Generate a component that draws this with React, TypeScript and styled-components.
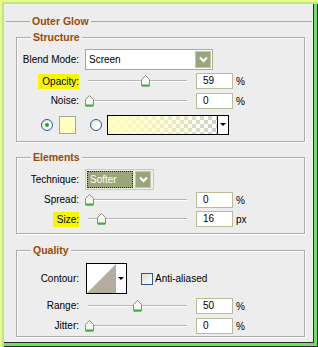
import React from "react";
import styled, { createGlobalStyle } from "styled-components";

const GlobalStyle = createGlobalStyle`
  html, body {
    margin: 0;
    padding: 0;
    background: #ededed;
  }
  body {
    font-family: "Liberation Sans", Arial, sans-serif;
    font-size: 10px;
    color: #000;
  }
`;

const Frame = styled.div`
  width: 318px;
  height: 347px;
  box-sizing: border-box;
  background: #ededed;
  padding: 15px 6px 0 6px;
  overflow: hidden;
  box-shadow: inset 2px 2px 0 #f4f48c, inset 4px 4px 0 #b4ec84,
    inset -1px -1px 0 #2b2b2b, inset -4px -4px 0 #78dc68,
    inset -5px -5px 0 #2b2b2b;
`;

const OuterSet = styled.fieldset`
  margin: 0;
  padding: 0 7px 0 10px;
  border: none;
  border-top: 1px solid #a9a9a9;
  min-width: 0;
`;

const Group = styled.fieldset<{ $top: number; $padTop: number; $padBottom: number }>`
  margin: ${(p) => p.$top}px 0 0 0;
  padding: ${(p) => p.$padTop}px 0 ${(p) => p.$padBottom}px 0;
  border: 1px solid #ababab;
  box-shadow: inset 1px 1px 0 #fff, 1px 1px 0 #fff;
  min-width: 0;
`;

const Legend = styled.legend`
  margin-left: 14px;
  padding: 0 2px;
  background: #ededed;
  font-size: 10.5px;
  font-weight: bold;
  line-height: 12px;
  color: #9c4a02;
`;

const Row = styled.div<{ $h: number; $mt?: number }>`
  display: flex;
  align-items: center;
  height: ${(p) => p.$h}px;
  margin-top: ${(p) => p.$mt ?? 0}px;
`;

const Label = styled.div`
  width: 62px;
  flex: none;
  text-align: right;
  line-height: 12px;
`;

const Highlight = styled.span`
  display: inline-block;
  background: #f6f600;
  padding: 2px 0 1px 4px;
`;

const Select = styled.div<{ $w: number }>`
  display: flex;
  align-items: center;
  box-sizing: border-box;
  width: ${(p) => p.$w}px;
  height: 21px;
  margin-left: 6px;
  border: 1px solid #a9ad8c;
  background: #fff;
`;

const SelectText = styled.div`
  flex: 1;
  padding-left: 3px;
`;

const ArrowBtn = styled.div`
  display: flex;
  align-items: center;
  justify-content: center;
  box-sizing: border-box;
  width: 16px;
  height: 17px;
  margin-right: 1px;
  background: #9aa57b;
  border: 1px solid #c3c8ab;
`;

const TechSelect = styled(Select)`
  border-color: #c9ccb5;
  background: #eef0e6;
  padding: 1px;
  gap: 2px;
`;

const TechValue = styled.div`
  flex: 1;
  height: 100%;
  box-sizing: border-box;
  background: #9ba67b;
  border: 1px dotted #2a2a1a;
  color: #fff;
  padding-left: 2px;
  line-height: 15px;
`;

const SliderTrack = styled.div`
  position: relative;
  width: 102px;
  height: 16px;
  margin-left: 6px;
  flex: none;
  &::before {
    content: "";
    position: absolute;
    left: 3px;
    right: 0;
    top: 7px;
    border-top: 1px solid #b5b5b5;
    border-bottom: 1px solid #fff;
  }
`;

const Thumb = styled.svg`
  position: absolute;
  top: 2px;
  width: 9px;
  height: 12px;
`;

const NumBox = styled.div`
  box-sizing: border-box;
  width: 37px;
  height: 16px;
  margin-left: 9px;
  border: 1px solid #b9bc9b;
  background: #fff;
  padding-left: 6px;
  line-height: 14px;
  flex: none;
`;

const Unit = styled.span`
  margin-left: 3px;
`;

const Radio = styled.div<{ $checked?: boolean; $ml: number }>`
  position: relative;
  box-sizing: border-box;
  width: 12px;
  height: 12px;
  margin-left: ${(p) => p.$ml}px;
  border: 1px solid #2a5b8a;
  border-radius: 50%;
  background: radial-gradient(circle at 65% 65%, #fff 30%, #dcdcd4 100%);
  flex: none;
  &::after {
    content: "";
    display: ${(p) => (p.$checked ? "block" : "none")};
    position: absolute;
    left: 3px;
    top: 3px;
    width: 4px;
    height: 4px;
    border-radius: 50%;
    background: #22a622;
  }
`;

const Swatch = styled.div`
  box-sizing: border-box;
  width: 17px;
  height: 18px;
  margin-left: 6px;
  border: 1px solid #a5a5a0;
  background: #ffffc2;
`;

const GradientPicker = styled.div`
  display: flex;
  box-sizing: border-box;
  width: 122px;
  height: 20px;
  margin-left: 5px;
  border: 1px solid #000;
`;

const GradientFill = styled.div`
  flex: 1;
  background: linear-gradient(to right, #ffffc2 0%, rgba(255, 255, 194, 0.6) 55%, rgba(255, 255, 194, 0) 100%),
    conic-gradient(#cfcfcf 25%, #fff 0 50%, #cfcfcf 0 75%, #fff 0) 0 0 / 8px 8px;
`;

const DropStrip = styled.div`
  display: flex;
  align-items: center;
  justify-content: center;
  width: 10px;
  border-left: 1px solid #000;
  background: #fff;
`;

const Caret = styled.div`
  width: 0;
  height: 0;
  border-left: 3px solid transparent;
  border-right: 3px solid transparent;
  border-top: 3px solid #000;
`;

const ContourBox = styled.div`
  display: flex;
  box-sizing: border-box;
  width: 41px;
  height: 31px;
  margin-left: 7px;
  border: 1px solid #000;
  background: #fff;
`;

const ContourStrip = styled.div`
  display: flex;
  align-items: center;
  justify-content: center;
  width: 10px;
  background: #fbfbfb;
`;

const CheckBox = styled.div`
  box-sizing: border-box;
  width: 12px;
  height: 12px;
  margin-left: 14px;
  border: 1px solid #2a5b8a;
  background: linear-gradient(135deg, #dcdcd4, #fff);
  flex: none;
`;

const CheckLabel = styled.span`
  margin-left: 2px;
`;

function Chevron() {
  return (
    <svg width="9" height="7" viewBox="0 0 9 7">
      <polyline points="1,1.5 4.5,5 8,1.5" fill="none" stroke="#fff" strokeWidth="2" />
    </svg>
  );
}

function Slider({ value }: { value: number }) {
  return (
    <SliderTrack>
      <Thumb viewBox="0 0 9 12" style={{ left: value * 93 }}>
        <polygon points="0.5,4.5 4.5,0.5 8.5,4.5 8.5,11 0.5,11" fill="#f6f6f2" stroke="#8d8d84" />
        <line x1="1" y1="10.5" x2="8" y2="10.5" stroke="#3bb33b" strokeWidth="2" />
      </Thumb>
    </SliderTrack>
  );
}

function SliderRow({
  label,
  value,
  frac,
  unit,
  mark,
  mt,
}: {
  label: string;
  value: string;
  frac: number;
  unit: string;
  mark?: boolean;
  mt: number;
}) {
  return (
    <Row $h={16} $mt={mt}>
      <Label>{mark ? <Highlight>{label}</Highlight> : label}</Label>
      <Slider value={frac} />
      <NumBox>{value}</NumBox>
      <Unit>{unit}</Unit>
    </Row>
  );
}

export default function App() {
  return (
    <Frame>
      <GlobalStyle />
      <OuterSet>
        <Legend>Outer Glow</Legend>

        <Group $top={4} $padTop={6} $padBottom={7}>
          <Legend>Structure</Legend>
          <Row $h={21}>
            <Label>Blend Mode:</Label>
            <Select $w={128}>
              <SelectText>Screen</SelectText>
              <ArrowBtn>
                <Chevron />
              </ArrowBtn>
            </Select>
          </Row>
          <SliderRow label="Opacity:" value="59" frac={0.6} unit="%" mark mt={3} />
          <SliderRow label="Noise:" value="0" frac={0} unit="%" mt={4} />
          <Row $h={19} $mt={6}>
            <Radio $checked $ml={24} />
            <Swatch />
            <Radio $ml={14} />
            <GradientPicker>
              <GradientFill />
              <DropStrip>
                <Caret />
              </DropStrip>
            </GradientPicker>
          </Row>
        </Group>

        <Group $top={9} $padTop={6} $padBottom={6}>
          <Legend>Elements</Legend>
          <Row $h={21}>
            <Label>Technique:</Label>
            <TechSelect $w={69}>
              <TechValue>Softer</TechValue>
              <ArrowBtn>
                <Chevron />
              </ArrowBtn>
            </TechSelect>
          </Row>
          <SliderRow label="Spread:" value="0" frac={0} unit="%" mt={2} />
          <SliderRow label="Size:" value="16" frac={0.13} unit="px" mark mt={3} />
        </Group>

        <Group $top={10} $padTop={7} $padBottom={2}>
          <Legend>Quality</Legend>
          <Row $h={31}>
            <Label>Contour:</Label>
            <ContourBox>
              <svg width="29" height="29" viewBox="0 0 29 29">
                <rect width="29" height="29" fill="#fff" />
                <polygon points="0,29 29,0 29,29" fill="#b3ad9f" />
              </svg>
              <ContourStrip>
                <Caret />
              </ContourStrip>
            </ContourBox>
            <CheckBox />
            <CheckLabel>Anti-aliased</CheckLabel>
          </Row>
          <SliderRow label="Range:" value="50" frac={0.52} unit="%" mt={4} />
          <SliderRow label="Jitter:" value="0" frac={0} unit="%" mt={4} />
        </Group>
      </OuterSet>
    </Frame>
  );
}
